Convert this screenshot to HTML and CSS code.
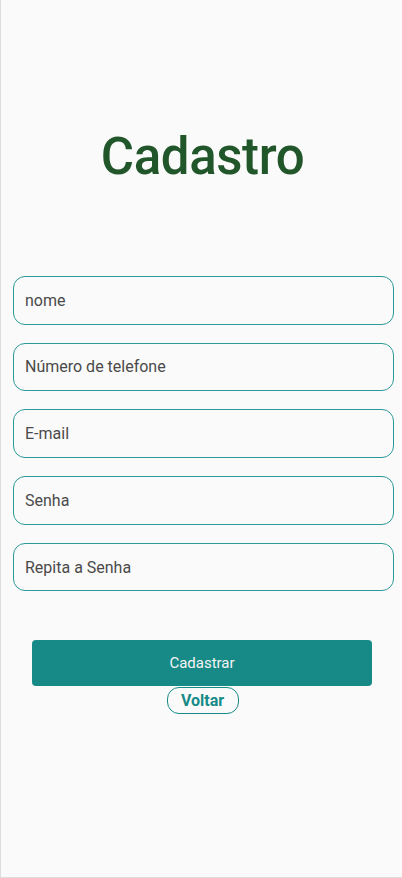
FILE: index.html
```html
<!DOCTYPE html>
<html lang="pt">
<head>
<meta charset="utf-8">
<link rel="stylesheet" href="styles.css">
</head>
<body>
<div class="screen">
  <h1 class="title">Cadastro</h1>
  <form class="form">
    <input class="field" type="text" placeholder="nome">
    <input class="field" type="text" placeholder="Número de telefone">
    <input class="field" type="text" placeholder="E-mail">
    <input class="field" type="password" placeholder="Senha">
    <input class="field" type="password" placeholder="Repita a Senha">
  </form>
  <div class="actions">
    <button class="primary" type="button">Cadastrar</button>
    <button class="back" type="button">Voltar</button>
  </div>
</div>
</body>
</html>
```
FILE: styles.css
```css
* { box-sizing: border-box; }
html, body { margin: 0; padding: 0; }
body {
  width: 402px;
  height: 878px;
  background: #fafafa;
  font-family: Roboto, "Noto Sans", sans-serif;
}
.screen {
  width: 402px;
  height: 878px;
  border-left: 1px solid #dcdcdc;
  border-bottom: 1px solid #dcdcdc;
  display: flex;
  flex-direction: column;
  align-items: center;
}
.title {
  margin: 125px 0 0 2px;
  font-size: 51px;
  line-height: 64px;
  font-weight: 500;
  color: #21562a;
  letter-spacing: -0.4px;
}
.form {
  margin-top: 87px;
  width: 381px;
  margin-left: 12px;
  align-self: flex-start;
  display: flex;
  flex-direction: column;
  gap: 18.2px;
}
.field {
  height: 48.5px;
  width: 100%;
  border: 1px solid #2a9a98;
  border-radius: 12px;
  background: #fafafa;
  padding: 0 11px;
  font-family: Roboto, sans-serif;
  font-size: 16px;
  color: #444;
  outline: none;
}
.field::placeholder { color: #4a4a4a; }
.actions {
  margin-top: 49px;
  display: flex;
  flex-direction: column;
  align-items: center;
  align-self: flex-start;
  margin-left: 31px;
  width: 340px;
}
.primary {
  width: 340px;
  height: 46px;
  border: none;
  border-radius: 4px;
  background: #178a87;
  color: #f4f4f4;
  font-family: Roboto, sans-serif;
  font-size: 15px;
  cursor: pointer;
}
.back {
  margin-top: 1px;
  margin-left: 1px;
  width: 72px;
  height: 27px;
  border: 1px solid #178a87;
  border-radius: 12px;
  background: #fafafa;
  color: #178a87;
  font-family: Roboto, sans-serif;
  font-weight: 700;
  font-size: 16px;
  padding: 0;
}
```
